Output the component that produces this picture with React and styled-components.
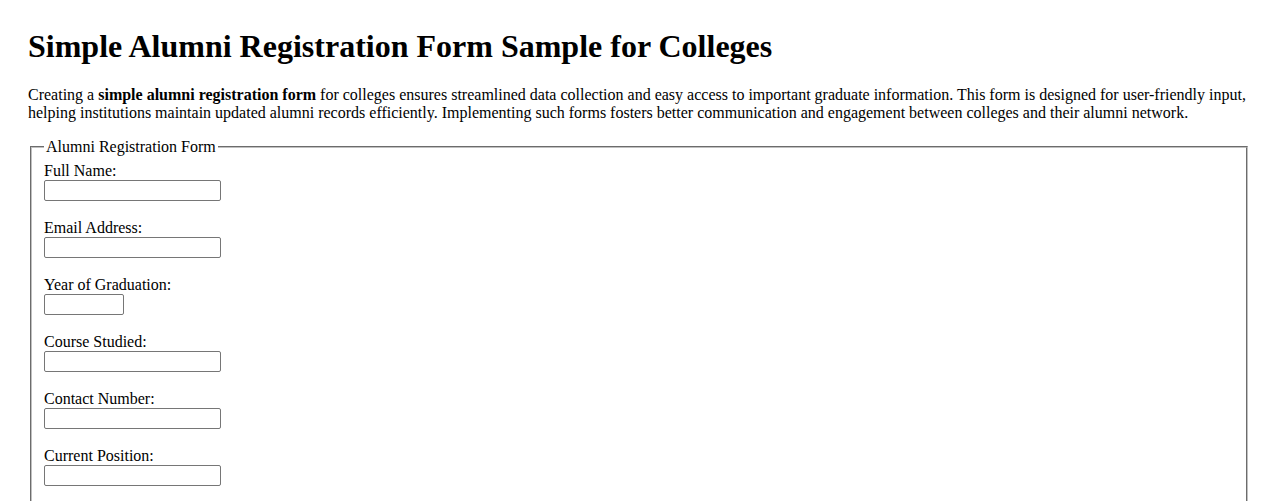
import React from "react";
import styled, { createGlobalStyle } from "styled-components";

const Global = createGlobalStyle`
  html, body { background: #fff; }
  body {
    margin: 28px;
    font-family: "Liberation Serif", "Times New Roman", serif;
    font-size: 16px;
    color: #000;
  }
`;

const Title = styled.h1`
  font-size: 32px;
  font-weight: bold;
  margin: 0 0 21.44px;
  line-height: normal;
`;

const Intro = styled.p`
  margin: 16px 0;
  line-height: normal;
`;

const Fieldset = styled.fieldset`
  margin: 0 2px;
  padding: 0.35em 0.75em 0.625em;
  border: 2px groove rgb(192, 192, 192);
`;

const Legend = styled.legend`
  padding: 0 2px;
`;

const Field = styled.div`
  display: flex;
  flex-direction: column;
  align-items: flex-start;
  margin-bottom: 18px;
  &:last-child { margin-bottom: 0; }
`;

const Label = styled.label`
  display: block;
  line-height: 18px;
`;

const Input = styled.input`
  box-sizing: border-box;
  width: ${(p) => p.$w || 177}px;
  height: 21px;
  margin: 0;
  padding: 1px 2px;
  border: 1px solid #767676;
  border-radius: 2px;
  background: #fff;
  font: 13.33px "Liberation Sans", Arial, sans-serif;
`;

const fields = [
  { id: "name", label: "Full Name:", type: "text" },
  { id: "email", label: "Email Address:", type: "email" },
  { id: "year", label: "Year of Graduation:", type: "text", w: 80 },
  { id: "course", label: "Course Studied:", type: "text" },
  { id: "phone", label: "Contact Number:", type: "tel" },
  { id: "position", label: "Current Position:", type: "text" },
  { id: "company", label: "Company / Organization:", type: "text" },
];

export default function App() {
  return (
    <>
      <Global />
      <Title>Simple Alumni Registration Form Sample for Colleges</Title>
      <Intro>
        Creating a <strong>simple alumni registration form</strong> for colleges ensures streamlined data
        collection and easy access to important graduate information. This form is designed for user-friendly
        input, helping institutions maintain updated alumni records efficiently. Implementing such forms fosters
        better communication and engagement between colleges and their alumni network.
      </Intro>
      <form onSubmit={(e) => e.preventDefault()}>
        <Fieldset>
          <Legend>Alumni Registration Form</Legend>
          {fields.map((f) => (
            <Field key={f.id}>
              <Label htmlFor={f.id}>{f.label}</Label>
              <Input id={f.id} type={f.type} $w={f.w} />
            </Field>
          ))}
        </Fieldset>
      </form>
    </>
  );
}
